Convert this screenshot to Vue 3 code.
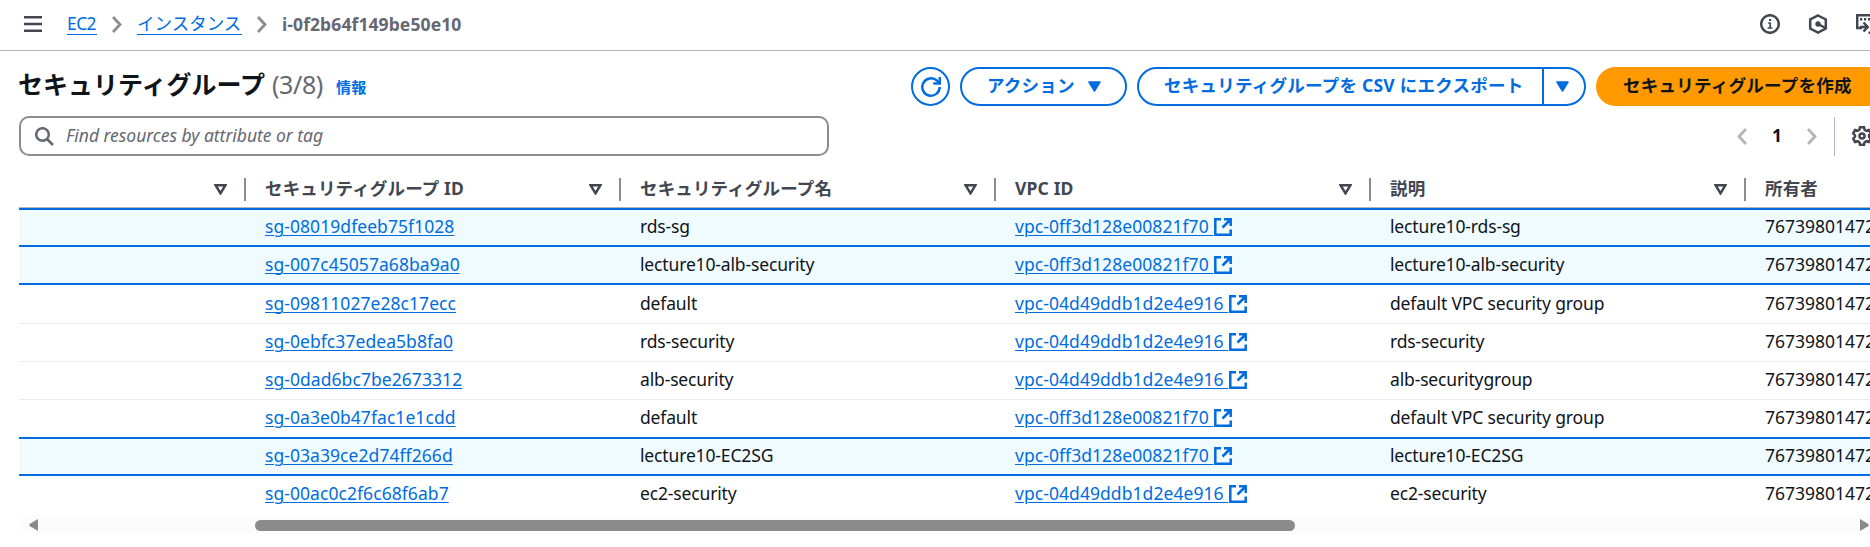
<script setup>
const columns = ['', 'セキュリティグループ ID', 'セキュリティグループ名', 'VPC ID', '説明', '所有者']
const A = 'vpc-0ff3d128e00821f70'
const B = 'vpc-04d49ddb1d2e4e916'
const rows = [
  { id: 'sg-08019dfeeb75f1028', name: 'rds-sg', vpc: A, desc: 'lecture10-rds-sg', cls: 'sel first' },
  { id: 'sg-007c45057a68ba9a0', name: 'lecture10-alb-security', vpc: A, desc: 'lecture10-alb-security', cls: 'sel' },
  { id: 'sg-09811027e28c17ecc', name: 'default', vpc: B, desc: 'default VPC security group', cls: '' },
  { id: 'sg-0ebfc37edea5b8fa0', name: 'rds-security', vpc: B, desc: 'rds-security', cls: '' },
  { id: 'sg-0dad6bc7be2673312', name: 'alb-security', vpc: B, desc: 'alb-securitygroup', cls: '' },
  { id: 'sg-0a3e0b47fac1e1cdd', name: 'default', vpc: A, desc: 'default VPC security group', cls: 'before' },
  { id: 'sg-03a39ce2d74ff266d', name: 'lecture10-EC2SG', vpc: A, desc: 'lecture10-EC2SG', cls: 'sel short' },
  { id: 'sg-00ac0c2f6c68f6ab7', name: 'ec2-security', vpc: B, desc: 'ec2-security', cls: 'last' },
]
</script>

<template>
  <div class="page">
    <header class="top">
      <svg class="menu" width="18" height="16" viewBox="0 0 18 16"><path d="M0 1.25h18M0 8h18M0 14.75h18" stroke="#424650" stroke-width="2.5" /></svg>
      <a class="crumb ec2">EC2</a>
      <svg class="chev" width="10" height="17" viewBox="0 0 10 17"><path d="M1 1l7 7.5L1 16" /></svg>
      <a class="crumb inst">インスタンス</a>
      <svg class="chev" width="10" height="17" viewBox="0 0 10 17"><path d="M1 1l7 7.5L1 16" /></svg>
      <span class="current">i-0f2b64f149be50e10</span>
      <div class="tools">
        <svg width="20" height="20" viewBox="0 0 20 20"><circle cx="10" cy="10" r="8.8" /><path d="M8.200 9h2v5M7.600 14h4.800" stroke-width="1.7" /><path d="M9 5h2.200v2H9z" fill="#424650" stroke="none" /></svg>
        <svg width="20" height="20" viewBox="0 0 20 20"><path d="M10 1.500l7.800 4v9L10 18.500l-7.800-4v-9z" /><circle cx="10" cy="10" r="2.700" fill="#424650" stroke="none" /><path d="M10 10l7.500 4" /></svg>
        <svg width="20" height="20" viewBox="0 0 20 20"><path d="M6 14H1.200V1.200H20M12.500 18.700H20" /><path d="M4 5.200h2.200M8 5.200h2.200M12 5.200h2.200" /><path d="M4 13h7M7.500 8.500l4.200 4.500-4.200 4.500" /></svg>
      </div>
    </header>

    <section class="head">
      <h2>セキュリティグループ</h2>
      <span class="count">(3/8)</span>
      <a class="info">情報</a>
      <div class="actions">
        <button class="btn round"><svg width="20" height="20" viewBox="0 0 20 20"><path d="M18.700 10A8.700 8.700 0 1 1 16 3.700L18.500 6" /><path d="M18.800 0v6.500h-6.500" /></svg></button>
        <button class="btn act"><span>アクション</span><svg class="tri" width="13" height="11" viewBox="0 0 13 11"><path d="M1 1h11L6.500 10z" /></svg></button>
        <div class="btn split">
          <span class="export">セキュリティグループを CSV にエクスポート</span>
          <span class="drop"><svg class="tri" width="13" height="11" viewBox="0 0 13 11"><path d="M1 1h11L6.500 10z" /></svg></span>
        </div>
        <button class="btn primary">セキュリティグループを作成</button>
      </div>
    </section>

    <section class="filter">
      <div class="search">
        <svg width="19" height="19" viewBox="0 0 19 19"><circle cx="7.500" cy="7.500" r="6.300" /><path d="M12 12l6 6" /></svg>
        <span>Find resources by attribute or tag</span>
      </div>
      <div class="pager">
        <svg class="arrow" width="10" height="17" viewBox="0 0 10 17"><path d="M9 1L2 8.500 9 16" /></svg>
        <b>1</b>
        <svg class="arrow" width="10" height="17" viewBox="0 0 10 17"><path d="M1 1l7 7.500L1 16" /></svg>
        <i class="rule"></i>
        <svg class="gear" width="20" height="20" viewBox="0 0 20 20"><path d="M8 1.200h4l.6 2.600 1.800 1 2.500-.8 2 3.400-1.900 1.800v1.600l1.900 1.800-2 3.400-2.500-.8-1.800 1-.6 2.600H8l-.6-2.600-1.800-1-2.500.8-2-3.400L3 10.800V9.200L1.100 7.400l2-3.400 2.500.8 1.800-1z" /><circle cx="10" cy="10" r="2.500" /></svg>
      </div>
    </section>

    <section class="table">
      <div class="row thead">
        <div v-for="(c, i) in columns" :key="i" class="th">
          <span>{{ c }}</span>
          <svg v-if="i < 5" width="13" height="11" viewBox="0 0 13 11"><path d="M1.700 1.300h9.600L6.500 9.300z" /></svg>
        </div>
      </div>
      <div v-for="r in rows" :key="r.id" class="row body" :class="r.cls">
        <div></div>
        <div><a class="id">{{ r.id }}</a></div>
        <div>{{ r.name }}</div>
        <div class="vpc"><a>{{ r.vpc }}&nbsp;</a><svg width="18" height="18" viewBox="0 0 18 18"><path d="M7 1.300H1.300v15.400h15.400V11.500" /><path d="M10 1.300h6.700V8M16.500 1.500L8.500 9.500" /></svg></div>
        <div>{{ r.desc }}</div>
        <div class="owner">767398014722</div>
      </div>
    </section>

    <div class="scroll">
      <svg width="9" height="12" viewBox="0 0 9 12"><path d="M9 0v12L1 7.200Q-.5 6 1 4.800z" /></svg>
      <i class="thumb"></i>
      <svg class="right" width="9" height="12" viewBox="0 0 9 12"><path d="M0 0v12l8-4.800q1.500-1.200 0-2.400z" /></svg>
    </div>
  </div>
</template>

<style>
body { background: #fff; overflow: hidden; }
</style>
<style scoped>
* { box-sizing: border-box; }
.page { width: 1870px; height: 547px; overflow: hidden; color: #0f141a; font: 17.5px/25px "Noto Sans", "Noto Sans CJK JP", sans-serif; }
svg { display: block; flex: none; fill: none; stroke-width: 2.5; }
a { color: #006ce0; }
.top { height: 51px; border-bottom: 1px solid #b4b4bb; display: flex; align-items: center; padding: 0 0 2px 24px; }
.crumb { border-bottom: 1px solid #006ce0; line-height: 21px; white-space: nowrap; }
.ec2 { margin-left: 25px; width: 30px; letter-spacing: -.6px; }
.inst { width: 105px; }
.chev { stroke: #8c8c94; stroke-width: 2.8; margin: 0 15px; }
.current { font-weight: 700; color: #656871; letter-spacing: .1px; }
.tools { margin-left: auto; margin-right: -6px; display: flex; gap: 28px; }
.tools svg { stroke: #424650; }
.head { height: 65px; padding: 16px 0 0 18px; display: flex; align-items: flex-start; white-space: nowrap; }
h2 { margin: 0; font-size: 25px; line-height: 34px; font-weight: 700; width: 254px; letter-spacing: 0; }
.count { font-size: 25px; line-height: 34px; color: #656871; letter-spacing: -.4px; width: 64px; }
.info { font-size: 15px; font-weight: 700; line-height: 41px; letter-spacing: .3px; }
.actions { margin-left: auto; margin-right: -16px; display: flex; gap: 10px; }
.btn { height: 39px; border: 2px solid #006ce0; border-radius: 20px; background: #fff; color: #006ce0; font: 700 17.5px/33px "Noto Sans", "Noto Sans CJK JP", sans-serif; letter-spacing: .25px; padding: 0; white-space: nowrap; display: flex; align-items: center; }
.btn.act, .btn.primary, .export { padding: 0 0 2px 25px; }
.round { width: 39px; justify-content: center; }
.round svg { stroke: #006ce0; }
.act { width: 167px; gap: 13px; }
.act svg { margin-top: 2px; }
.tri { fill: #006ce0; stroke: #006ce0; stroke-width: 1.500; stroke-linejoin: round; }
.split { width: 449px; }
.export { width: 403px; }
.drop { border-left: 2px solid #006ce0; height: 35px; flex: 1; padding-left: 12px; display: flex; align-items: center; }
.primary { background: #ff9900; border-color: #ff9900; color: #0f141a; width: 290px; }
.filter { height: 41px; padding-left: 19px; display: flex; }
.search { width: 810px; height: 40px; border: 2px solid #8c8c94; border-radius: 10px; display: flex; align-items: center; padding-left: 14px; gap: 12px; color: #656871; font-style: italic; }
.search svg { stroke: #656871; }
.search span { letter-spacing: -.03px; padding-bottom: 1px; }
.pager { margin-left: auto; margin-right: -2px; display: flex; align-items: center; height: 40px; }
.arrow { stroke: #b4b4bb; stroke-width: 2.8; }
.pager b { width: 46px; text-align: center; margin: 0 7px; padding-bottom: 1px; }
.rule { width: 1px; height: 39px; background: #b4b4bb; margin: 0 17px; }
.gear { stroke: #424650; }
.table { margin-left: 19px; }
.row { display: grid; grid-template-columns: 246px 375px 375px 375px 375px 200px; width: 1946px; white-space: nowrap; }
.thead { height: 51px; border-bottom: 1px solid #b4b4bb; font-weight: 700; color: #424650; padding-top: 21px; }
.th { height: 23px; position: relative; display: flex; align-items: center; justify-content: space-between; padding-right: 38px; letter-spacing: .15px; }
.th span { padding-bottom: 2px; }
.th:not(:last-child)::after { content: ""; position: absolute; right: 19px; top: 0; width: 2px; height: 23px; background: #8c8c94; }
.th svg { stroke: #424650; }
.body { height: 38px; border-bottom: 1px solid #ebebf0; align-items: center; letter-spacing: -.15px; padding-bottom: 2px; }
.body:nth-child(4) { height: 39px; }
.sel { background: #f0fbff; border-bottom: 2px solid #006ce0; }
.first { height: 39px; border-top: 2px solid #006ce0; }
.before { height: 39px; border-bottom: 2px solid #006ce0; }
.short { height: 37px; }
.last { border: 0; height: 40px; padding-bottom: 5px; }
.body a { text-decoration: underline; text-underline-offset: 2px; text-decoration-thickness: 1px; letter-spacing: .06px; }
.vpc { display: flex; align-items: center; }
.vpc svg { stroke: #006ce0; margin: 1px 0 0 1px; }
.owner { letter-spacing: 0; }
.scroll { margin-left: 19px; height: 18px; background: #fcfcfc; border-radius: 9px 0 0 9px; display: flex; align-items: center; padding-left: 10px; }
.scroll svg { fill: #8b8b8b; }
.thumb { width: 1040px; height: 11px; border-radius: 6px; background: #8b8b8b; margin-left: 217px; }
.right { margin-left: auto; margin-right: 1px; }
</style>
